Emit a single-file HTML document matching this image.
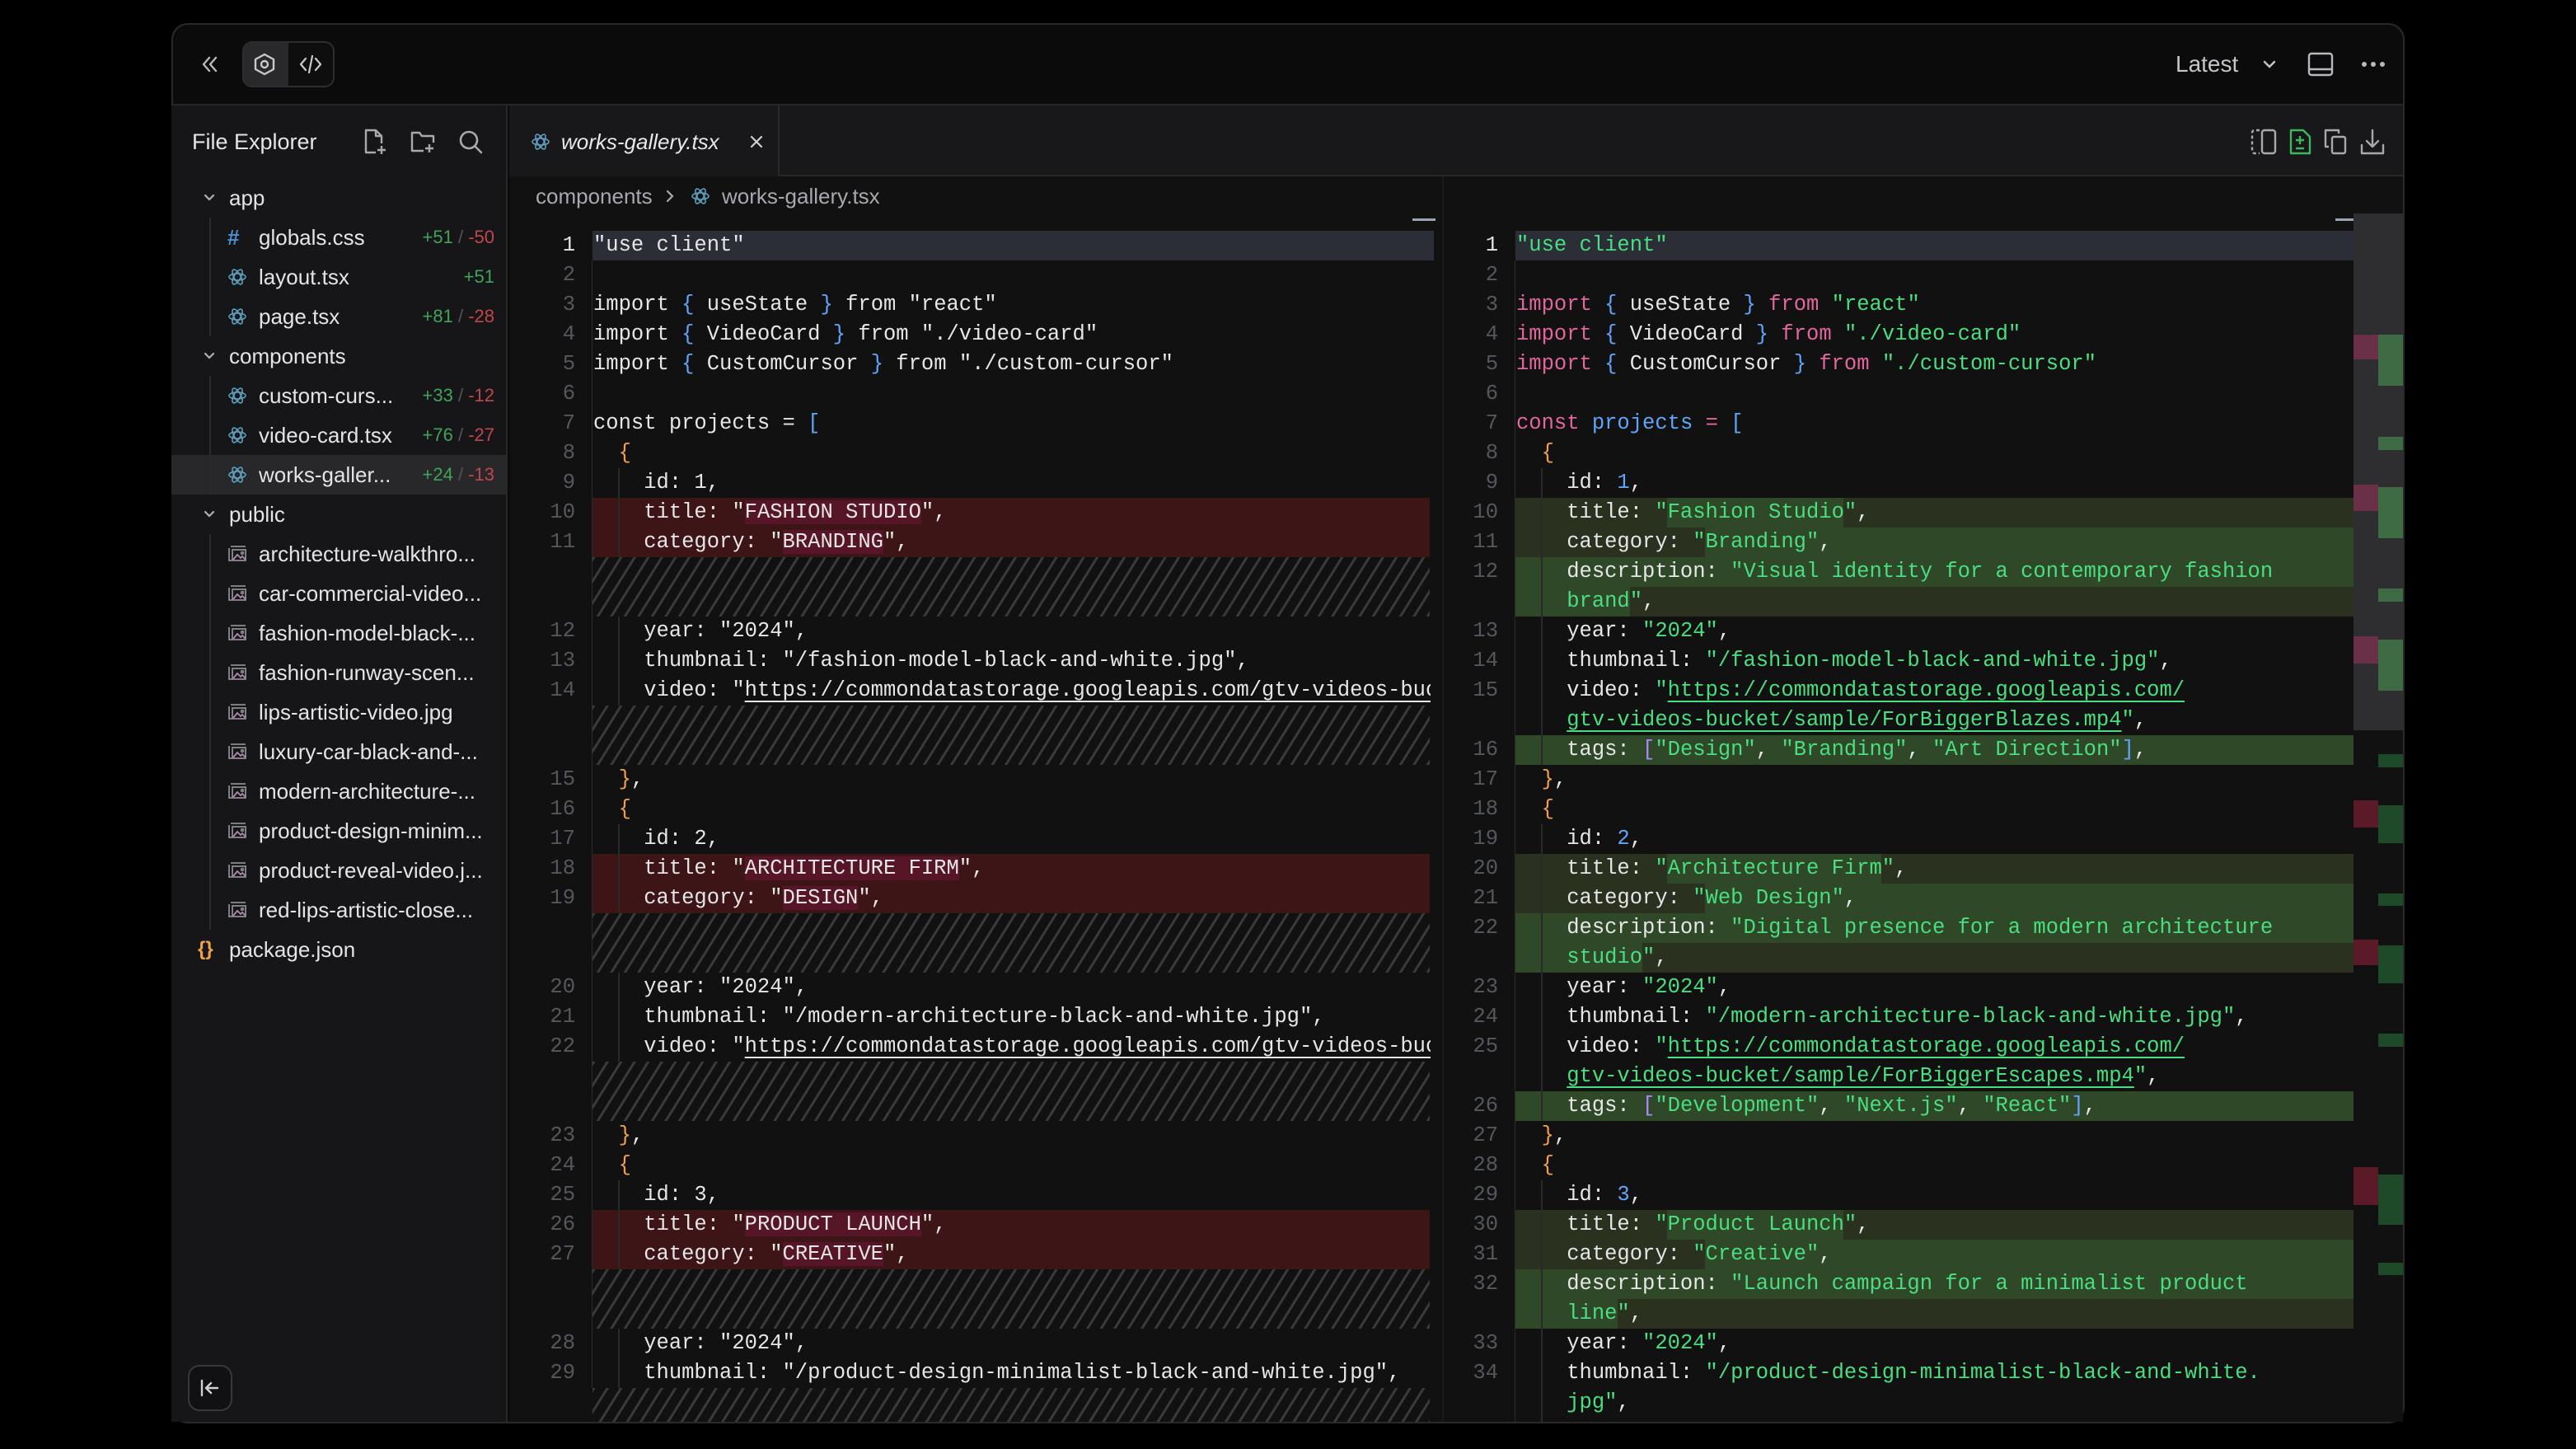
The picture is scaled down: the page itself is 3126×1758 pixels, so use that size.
<!DOCTYPE html>
<html><head><meta charset="utf-8"><style>
*{margin:0;padding:0;box-sizing:border-box}
body{width:3126px;height:1758px;background:#000;position:relative;overflow:hidden;font-family:"Liberation Sans",sans-serif}
.win{position:absolute;left:208px;top:28px;width:2710px;height:1699px;border:2px solid #2a2a2c;border-radius:20px;background:#0b0b0c;overflow:hidden}
.a{position:absolute}
.side{position:absolute;left:208px;top:128px;width:408px;height:1597px;background:#161618;border-right:2px solid #28282b}
.st{position:absolute;font-size:26px;color:#e4e4e7;line-height:48px;height:48px;white-space:nowrap}
.stat{position:absolute;right:0;font-size:22px;line-height:48px;height:48px;white-space:nowrap}
.g{color:#3fa35a}.rd{color:#c0464e}.sl{color:#555}
.r{position:absolute;height:36px;line-height:36px;white-space:pre;font-family:"Liberation Mono",monospace;font-size:25.5px;overflow:hidden}
.nl{left:640px;width:58px;text-align:right;color:#54585e}
.cl{left:720px;width:1016px;color:#e6e6e6}
.nr{left:1760px;width:58px;text-align:right;color:#54585e}
.cr{left:1840px;width:1016px;color:#e6e6e6}
.k{color:#e2669e}.s{color:#4ade80}.b{color:#60a5fa}.o{color:#f0a04b}.p{color:#a78bfa}
u{text-decoration:underline;text-underline-offset:6px;text-decoration-thickness:2px}
.del{position:absolute;left:719px;width:1016px;height:36px;background:#3d1517}
.dh{background:#561628}
.hat{position:absolute;left:719px;width:1016px;background:repeating-linear-gradient(122deg,#3a3a3c 0 3px,transparent 3px 14px)}
.add{position:absolute;left:1839px;width:1017px;height:36px;background:#2a311f}
.br{position:absolute;height:36px;background:#2f4828}
.guide{position:absolute;width:2px;background:#2a2a2c}
.mm{position:absolute}
</style></head><body>
<div class="win"></div>
<!-- top bar -->
<div class="a" style="left:210px;top:126px;width:2706px;height:2px;background:#262628"></div>
<svg class="a" style="left:240px;top:64px" width="28" height="28" viewBox="0 0 28 28" fill="none" stroke="#b8b8bd" stroke-width="2.4" stroke-linecap="round" stroke-linejoin="round"><path d="M14 6l-7 8 7 8M22 6l-7 8 7 8"/></svg>
<div class="a" style="left:294px;top:50px;width:112px;height:56px;border:2px solid #2e2e31;border-radius:12px;background:#0e0e0f"></div>
<div class="a" style="left:296px;top:52px;width:54px;height:52px;border-radius:10px 0 0 10px;background:#29292c"></div>
<svg class="a" style="left:305px;top:62px" width="32" height="32" viewBox="0 0 32 32" fill="none" stroke="#c8c8cc" stroke-width="2.4"><path d="M16 4l11 6v12l-11 6-11-6V10z" stroke-linejoin="round"/><circle cx="16" cy="16" r="4"/></svg>
<svg class="a" style="left:361px;top:62px" width="32" height="32" viewBox="0 0 32 32" fill="none" stroke="#c8c8cc" stroke-width="2.2" stroke-linecap="round" stroke-linejoin="round"><path d="M10 9l-6 7 6 7M22 9l6 7-6 7M18 6l-4 20"/></svg>
<div class="a" style="left:2640px;top:60px;font-size:28px;color:#c4c4c9;line-height:36px">Latest</div>
<svg class="a" style="left:2742px;top:66px" width="24" height="24" viewBox="0 0 24 24" fill="none" stroke="#c4c4c9" stroke-width="2.4" stroke-linecap="round"><path d="M6 9l6 6 6-6"/></svg>
<svg class="a" style="left:2798px;top:60px" width="36" height="36" viewBox="0 0 36 36" fill="none" stroke="#b8b8bd" stroke-width="2.4"><rect x="4" y="5" width="28" height="26" rx="3"/><path d="M4 24h28"/></svg>
<svg class="a" style="left:2864px;top:68px" width="32" height="20" viewBox="0 0 32 20" fill="#b8b8bd"><circle cx="5" cy="10" r="3"/><circle cx="16" cy="10" r="3"/><circle cx="27" cy="10" r="3"/></svg>

<!-- sidebar -->
<div class="side">
<div class="a" style="left:25px;top:26px;font-size:27px;color:#e4e4e7;line-height:36px">File Explorer</div>
<svg class="a" style="left:230px;top:27px" width="34" height="34" viewBox="0 0 34 34" fill="none" stroke="#a8a8ad" stroke-width="2.4" stroke-linejoin="round"><path d="M18 30H6V3h12l7 7v9"/><path d="M18 3v7h7M25 22v10M20 27h10"/></svg>
<svg class="a" style="left:288px;top:27px" width="34" height="34" viewBox="0 0 34 34" fill="none" stroke="#a8a8ad" stroke-width="2.4" stroke-linejoin="round"><path d="M18 28H4V6h9l3 4h14v8"/><path d="M25 20v10M20 25h10"/></svg>
<svg class="a" style="left:346px;top:27px" width="34" height="34" viewBox="0 0 34 34" fill="none" stroke="#a8a8ad" stroke-width="2.6" stroke-linecap="round"><circle cx="15" cy="15" r="10"/><path d="M22 22l8 8"/></svg>
<!-- rows: sidebar origin top 128; row centers 240.. -> top = center-24-128 -->
<div class="a" style="left:0;top:424px;width:406px;height:48px;background:#28282b"></div>
<div class="guide" style="left:46px;top:136px;height:144px"></div>
<div class="guide" style="left:46px;top:328px;height:144px"></div>
<div class="guide" style="left:46px;top:520px;height:480px"></div>
</div>
<!-- sidebar items absolute -->
<svg class="a" style="left:244px;top:230px" width="20" height="20" viewBox="0 0 20 20" fill="none" stroke="#b0b0b5" stroke-width="2.2" stroke-linecap="round"><path d="M5 7l5 5 5-5"/></svg>
<div class="st" style="left:278px;top:216px">app</div>
<div class="a" style="left:276px;top:274px;font-size:26px;font-weight:bold;color:#4a8fd0;line-height:28px">#</div>
<div class="st" style="left:314px;top:264px">globals.css</div>
<div class="st" style="left:314px;top:312px">layout.tsx</div>
<div class="st" style="left:314px;top:360px">page.tsx</div>
<svg class="a" style="left:244px;top:422px" width="20" height="20" viewBox="0 0 20 20" fill="none" stroke="#b0b0b5" stroke-width="2.2" stroke-linecap="round"><path d="M5 7l5 5 5-5"/></svg>
<div class="st" style="left:278px;top:408px">components</div>
<div class="st" style="left:314px;top:456px">custom-curs...</div>
<div class="st" style="left:314px;top:504px">video-card.tsx</div>
<div class="st" style="left:314px;top:552px">works-galler...</div>
<svg class="a" style="left:244px;top:614px" width="20" height="20" viewBox="0 0 20 20" fill="none" stroke="#b0b0b5" stroke-width="2.2" stroke-linecap="round"><path d="M5 7l5 5 5-5"/></svg>
<div class="st" style="left:278px;top:600px">public</div>
<div class="st" style="left:314px;top:648px">architecture-walkthro...</div>
<div class="st" style="left:314px;top:696px">car-commercial-video...</div>
<div class="st" style="left:314px;top:744px">fashion-model-black-...</div>
<div class="st" style="left:314px;top:792px">fashion-runway-scen...</div>
<div class="st" style="left:314px;top:840px">lips-artistic-video.jpg</div>
<div class="st" style="left:314px;top:888px">luxury-car-black-and-...</div>
<div class="st" style="left:314px;top:936px">modern-architecture-...</div>
<div class="st" style="left:314px;top:984px">product-design-minim...</div>
<div class="st" style="left:314px;top:1032px">product-reveal-video.j...</div>
<div class="st" style="left:314px;top:1080px">red-lips-artistic-close...</div>
<div class="a" style="left:240px;top:1138px;font-size:24px;font-weight:bold;color:#f0a04b;line-height:28px">{}</div>
<div class="st" style="left:278px;top:1128px">package.json</div>
<!-- stats -->
<div class="stat" style="left:460px;width:140px;text-align:right;top:264px"><span class="g">+51</span><span class="sl"> / </span><span class="rd">-50</span></div>
<div class="stat" style="left:460px;width:140px;text-align:right;top:312px"><span class="g">+51</span></div>
<div class="stat" style="left:460px;width:140px;text-align:right;top:360px"><span class="g">+81</span><span class="sl"> / </span><span class="rd">-28</span></div>
<div class="stat" style="left:460px;width:140px;text-align:right;top:456px"><span class="g">+33</span><span class="sl"> / </span><span class="rd">-12</span></div>
<div class="stat" style="left:460px;width:140px;text-align:right;top:504px"><span class="g">+76</span><span class="sl"> / </span><span class="rd">-27</span></div>
<div class="stat" style="left:460px;width:140px;text-align:right;top:552px"><span class="g">+24</span><span class="sl"> / </span><span class="rd">-13</span></div>
<!-- react icons -->
<svg width="0" height="0" style="position:absolute"><defs><g id="atom" fill="none" stroke="#5f9fbf" stroke-width="1.6"><ellipse cx="12" cy="12" rx="10" ry="4"/><ellipse cx="12" cy="12" rx="10" ry="4" transform="rotate(60 12 12)"/><ellipse cx="12" cy="12" rx="10" ry="4" transform="rotate(120 12 12)"/></g>
<g id="img" fill="none" stroke="#8a8a90" stroke-width="1.8"><path d="M2 5v15h3M4 3h18"/><rect x="6" y="7" width="16" height="13"/><path d="M7 19l5-6 4 4 2-2 4 4" stroke="#b08aa8"/><circle cx="18" cy="11" r="1.4"/></g></defs></svg>
<svg class="a" style="left:276px;top:324px" width="24" height="24"><use href="#atom"/></svg>
<svg class="a" style="left:276px;top:372px" width="24" height="24"><use href="#atom"/></svg>
<svg class="a" style="left:276px;top:468px" width="24" height="24"><use href="#atom"/></svg>
<svg class="a" style="left:276px;top:516px" width="24" height="24"><use href="#atom"/></svg>
<svg class="a" style="left:276px;top:564px" width="24" height="24"><use href="#atom"/></svg>
<svg class="a" style="left:276px;top:660px" width="24" height="24"><use href="#img"/></svg>
<svg class="a" style="left:276px;top:708px" width="24" height="24"><use href="#img"/></svg>
<svg class="a" style="left:276px;top:756px" width="24" height="24"><use href="#img"/></svg>
<svg class="a" style="left:276px;top:804px" width="24" height="24"><use href="#img"/></svg>
<svg class="a" style="left:276px;top:852px" width="24" height="24"><use href="#img"/></svg>
<svg class="a" style="left:276px;top:900px" width="24" height="24"><use href="#img"/></svg>
<svg class="a" style="left:276px;top:948px" width="24" height="24"><use href="#img"/></svg>
<svg class="a" style="left:276px;top:996px" width="24" height="24"><use href="#img"/></svg>
<svg class="a" style="left:276px;top:1044px" width="24" height="24"><use href="#img"/></svg>
<svg class="a" style="left:276px;top:1092px" width="24" height="24"><use href="#img"/></svg>
<!-- collapse btn -->
<div class="a" style="left:228px;top:1656px;width:54px;height:56px;border:2px solid #38383b;border-radius:14px;background:#111113"></div>
<svg class="a" style="left:240px;top:1670px" width="30" height="28" viewBox="0 0 30 28" fill="none" stroke="#d0d0d4" stroke-width="2.4" stroke-linecap="round" stroke-linejoin="round"><path d="M5 5v18M24 14H10M16 8l-6 6 6 6"/></svg>

<!-- editor -->
<div class="a" style="left:618px;top:128px;width:2298px;height:86px;background:#18181b"></div>
<div class="a" style="left:945px;top:212px;width:1971px;height:2px;background:#28282b"></div>
<div class="a" style="left:944px;top:128px;width:2px;height:86px;background:#28282b"></div>
<div class="a" style="left:618px;top:214px;width:2298px;height:1511px;background:#111111"></div>
<svg class="a" style="left:644px;top:160px" width="24" height="24"><use href="#atom"/></svg>
<div class="a" style="left:681px;top:154px;font-size:26px;font-style:italic;color:#e8e8ec;line-height:36px">works-gallery.tsx</div>
<svg class="a" style="left:906px;top:160px" width="24" height="24" viewBox="0 0 24 24" stroke="#d0d0d4" stroke-width="2.2" stroke-linecap="round"><path d="M6 6l12 12M18 6L6 18"/></svg>
<!-- tab bar right icons -->
<svg class="a" style="left:2730px;top:154px" width="34" height="36" viewBox="0 0 34 36" fill="none" stroke="#a8a8ad" stroke-width="2.4"><path d="M12 4H6a3 3 0 0 0-3 3v22a3 3 0 0 0 3 3h6" stroke-dasharray="4 3"/><rect x="15" y="4" width="16" height="28" rx="3"/></svg>
<svg class="a" style="left:2776px;top:154px" width="30" height="36" viewBox="0 0 30 36" fill="none" stroke="#3cb85c" stroke-width="2.4" stroke-linejoin="round"><path d="M4 4h15l8 8v20H4z"/><path d="M15 11v10M10 16h10M10 26h10"/></svg>
<svg class="a" style="left:2818px;top:154px" width="34" height="36" viewBox="0 0 34 36" fill="none" stroke="#a8a8ad" stroke-width="2.4" stroke-linejoin="round"><path d="M8 24H4V4h16v4"/><rect x="12" y="12" width="16" height="20" rx="2"/></svg>
<svg class="a" style="left:2862px;top:154px" width="34" height="36" viewBox="0 0 34 36" fill="none" stroke="#a8a8ad" stroke-width="2.4" stroke-linecap="round" stroke-linejoin="round"><path d="M4 22v10h26V22M17 4v20M10 17l7 7 7-7"/></svg>
<!-- breadcrumb -->
<div class="a" style="left:650px;top:220px;font-size:26px;color:#a8a8b0;line-height:36px">components</div>
<svg class="a" style="left:804px;top:228px" width="18" height="20" viewBox="0 0 18 20" fill="none" stroke="#a8a8b0" stroke-width="2.2" stroke-linecap="round"><path d="M6 4l6 6-6 6"/></svg>
<svg class="a" style="left:838px;top:226px" width="24" height="24"><use href="#atom"/></svg>
<div class="a" style="left:876px;top:220px;font-size:26px;color:#a8a8b0;line-height:36px">works-gallery.tsx</div>
<div class="a" style="left:1714px;top:265px;width:28px;height:3px;background:#9aa4b4"></div>
<div class="a" style="left:2834px;top:265px;width:28px;height:3px;background:#9aa4b4"></div>

<!-- left pane backgrounds -->
<div class="a" style="left:719px;top:280px;width:1021px;height:36px;background:#2b2e36"></div>
<div class="del" style="top:604px"></div><div class="del" style="top:640px"></div>
<div class="del" style="top:1036px"></div><div class="del" style="top:1072px"></div>
<div class="del" style="top:1468px"></div><div class="del" style="top:1504px"></div>
<div class="hat" style="top:676px;height:72px"></div>
<div class="hat" style="top:856px;height:72px"></div>
<div class="hat" style="top:1108px;height:72px"></div>
<div class="hat" style="top:1288px;height:72px"></div>
<div class="hat" style="top:1540px;height:72px"></div>
<div class="hat" style="top:1684px;height:41px"></div>
<div class="guide" style="left:718px;top:316px;height:1368px;width:1px;background:#2a2a2c"></div>
<div class="guide" style="left:750px;top:568px;height:108px"></div>
<div class="guide" style="left:750px;top:748px;height:108px"></div>
<div class="guide" style="left:750px;top:1000px;height:108px"></div>
<div class="guide" style="left:750px;top:1180px;height:108px"></div>
<div class="guide" style="left:750px;top:1432px;height:108px"></div>
<div class="guide" style="left:750px;top:1612px;height:72px"></div>
<div class="a" style="left:1750px;top:214px;width:2px;height:1511px;background:#1a1a1c"></div>

<!-- right pane backgrounds -->
<div class="a" style="left:1839px;top:280px;width:1017px;height:36px;background:#2b2e36"></div>
<div class="add" style="top:604px"></div><div class="br" style="top:604px;left:2023px;width:214px"></div>
<div class="add" style="top:640px"></div><div class="br" style="top:640px;left:2069px;width:787px"></div>
<div class="br" style="top:676px;left:1839px;width:1017px"></div>
<div class="add" style="top:712px"></div><div class="br" style="top:712px;left:1839px;width:139px"></div>
<div class="br" style="top:892px;left:1839px;width:1017px"></div>
<div class="add" style="top:1036px"></div><div class="br" style="top:1036px;left:2023px;width:260px"></div>
<div class="add" style="top:1072px"></div><div class="br" style="top:1072px;left:2069px;width:787px"></div>
<div class="br" style="top:1108px;left:1839px;width:1017px"></div>
<div class="add" style="top:1144px"></div><div class="br" style="top:1144px;left:1839px;width:154px"></div>
<div class="br" style="top:1324px;left:1839px;width:1017px"></div>
<div class="add" style="top:1468px"></div><div class="br" style="top:1468px;left:2023px;width:214px"></div>
<div class="add" style="top:1504px"></div><div class="br" style="top:1504px;left:2069px;width:787px"></div>
<div class="br" style="top:1540px;left:1839px;width:1017px"></div>
<div class="add" style="top:1576px"></div><div class="br" style="top:1576px;left:1839px;width:124px"></div>
<div class="guide" style="left:1838px;top:316px;height:1409px;width:1px;background:#2a2a2c"></div>
<div class="guide" style="left:1870px;top:568px;height:360px"></div>
<div class="guide" style="left:1870px;top:1000px;height:360px"></div>
<div class="guide" style="left:1870px;top:1432px;height:293px"></div>

<!-- minimap -->
<div class="mm" style="left:2856px;top:259px;width:60px;height:627px;background:#2e2e30"></div>
<div class="mm" style="left:2856px;top:406px;width:30px;height:30px;background:#6a3048"></div>
<div class="mm" style="left:2856px;top:588px;width:30px;height:32px;background:#6a3048"></div>
<div class="mm" style="left:2856px;top:772px;width:30px;height:33px;background:#6a3048"></div>
<div class="mm" style="left:2856px;top:971px;width:30px;height:33px;background:#5a1a28"></div>
<div class="mm" style="left:2856px;top:1140px;width:30px;height:31px;background:#5a1a28"></div>
<div class="mm" style="left:2856px;top:1416px;width:30px;height:46px;background:#5a1a28"></div>
<div class="mm" style="left:2886px;top:406px;width:30px;height:62px;background:#3e6a44"></div>
<div class="mm" style="left:2886px;top:530px;width:30px;height:16px;background:#3e6a44"></div>
<div class="mm" style="left:2886px;top:591px;width:30px;height:62px;background:#3e6a44"></div>
<div class="mm" style="left:2886px;top:714px;width:30px;height:16px;background:#3e6a44"></div>
<div class="mm" style="left:2886px;top:776px;width:30px;height:62px;background:#3e6a44"></div>
<div class="mm" style="left:2886px;top:915px;width:30px;height:16px;background:#1f4a2a"></div>
<div class="mm" style="left:2886px;top:977px;width:30px;height:46px;background:#1f4a2a"></div>
<div class="mm" style="left:2886px;top:1084px;width:30px;height:15px;background:#1f4a2a"></div>
<div class="mm" style="left:2886px;top:1147px;width:30px;height:46px;background:#1f4a2a"></div>
<div class="mm" style="left:2886px;top:1254px;width:30px;height:16px;background:#1f4a2a"></div>
<div class="mm" style="left:2886px;top:1425px;width:30px;height:61px;background:#1f4a2a"></div>
<div class="mm" style="left:2886px;top:1532px;width:30px;height:15px;background:#1f4a2a"></div>

<!-- left code -->
<div class="r nl" style="top:280px;color:#e6e6e6">1</div><div class="r cl" style="top:280px">"use client"</div>
<div class="r nl" style="top:316px">2</div>
<div class="r nl" style="top:352px">3</div><div class="r cl" style="top:352px">import <span class="b">{</span> useState <span class="b">}</span> from "react"</div>
<div class="r nl" style="top:388px">4</div><div class="r cl" style="top:388px">import <span class="b">{</span> VideoCard <span class="b">}</span> from "./video-card"</div>
<div class="r nl" style="top:424px">5</div><div class="r cl" style="top:424px">import <span class="b">{</span> CustomCursor <span class="b">}</span> from "./custom-cursor"</div>
<div class="r nl" style="top:460px">6</div>
<div class="r nl" style="top:496px">7</div><div class="r cl" style="top:496px">const projects = <span class="b">[</span></div>
<div class="r nl" style="top:532px">8</div><div class="r cl" style="top:532px">  <span class="o">{</span></div>
<div class="r nl" style="top:568px">9</div><div class="r cl" style="top:568px">    id: 1,</div>
<div class="r nl" style="top:604px">10</div><div class="r cl" style="top:604px">    title: "<span class="dh">FASHION STUDIO</span>",</div>
<div class="r nl" style="top:640px">11</div><div class="r cl" style="top:640px">    category: "<span class="dh">BRANDING</span>",</div>
<div class="r nl" style="top:748px">12</div><div class="r cl" style="top:748px">    year: "2024",</div>
<div class="r nl" style="top:784px">13</div><div class="r cl" style="top:784px">    thumbnail: "/fashion-model-black-and-white.jpg",</div>
<div class="r nl" style="top:820px">14</div><div class="r cl" style="top:820px">    video: "<u>https://commondatastorage.googleapis.com/gtv-videos-bucket/sample/ForBiggerBlazes.mp4</u>",</div>
<div class="r nl" style="top:928px">15</div><div class="r cl" style="top:928px">  <span class="o">}</span>,</div>
<div class="r nl" style="top:964px">16</div><div class="r cl" style="top:964px">  <span class="o">{</span></div>
<div class="r nl" style="top:1000px">17</div><div class="r cl" style="top:1000px">    id: 2,</div>
<div class="r nl" style="top:1036px">18</div><div class="r cl" style="top:1036px">    title: "<span class="dh">ARCHITECTURE FIRM</span>",</div>
<div class="r nl" style="top:1072px">19</div><div class="r cl" style="top:1072px">    category: "<span class="dh">DESIGN</span>",</div>
<div class="r nl" style="top:1180px">20</div><div class="r cl" style="top:1180px">    year: "2024",</div>
<div class="r nl" style="top:1216px">21</div><div class="r cl" style="top:1216px">    thumbnail: "/modern-architecture-black-and-white.jpg",</div>
<div class="r nl" style="top:1252px">22</div><div class="r cl" style="top:1252px">    video: "<u>https://commondatastorage.googleapis.com/gtv-videos-bucket/sample/ForBiggerEscapes.mp4</u>",</div>
<div class="r nl" style="top:1360px">23</div><div class="r cl" style="top:1360px">  <span class="o">}</span>,</div>
<div class="r nl" style="top:1396px">24</div><div class="r cl" style="top:1396px">  <span class="o">{</span></div>
<div class="r nl" style="top:1432px">25</div><div class="r cl" style="top:1432px">    id: 3,</div>
<div class="r nl" style="top:1468px">26</div><div class="r cl" style="top:1468px">    title: "<span class="dh">PRODUCT LAUNCH</span>",</div>
<div class="r nl" style="top:1504px">27</div><div class="r cl" style="top:1504px">    category: "<span class="dh">CREATIVE</span>",</div>
<div class="r nl" style="top:1612px">28</div><div class="r cl" style="top:1612px">    year: "2024",</div>
<div class="r nl" style="top:1648px">29</div><div class="r cl" style="top:1648px">    thumbnail: "/product-design-minimalist-black-and-white.jpg",</div>

<!-- right code -->
<div class="r nr" style="top:280px;color:#e6e6e6">1</div><div class="r cr" style="top:280px"><span class="s">"use client"</span></div>
<div class="r nr" style="top:316px">2</div>
<div class="r nr" style="top:352px">3</div><div class="r cr" style="top:352px"><span class="k">import</span> <span class="b">{</span> useState <span class="b">}</span> <span class="k">from</span> <span class="s">"react"</span></div>
<div class="r nr" style="top:388px">4</div><div class="r cr" style="top:388px"><span class="k">import</span> <span class="b">{</span> VideoCard <span class="b">}</span> <span class="k">from</span> <span class="s">"./video-card"</span></div>
<div class="r nr" style="top:424px">5</div><div class="r cr" style="top:424px"><span class="k">import</span> <span class="b">{</span> CustomCursor <span class="b">}</span> <span class="k">from</span> <span class="s">"./custom-cursor"</span></div>
<div class="r nr" style="top:460px">6</div>
<div class="r nr" style="top:496px">7</div><div class="r cr" style="top:496px"><span class="k">const</span> <span class="b">projects</span> <span class="k">=</span> <span class="b">[</span></div>
<div class="r nr" style="top:532px">8</div><div class="r cr" style="top:532px">  <span class="o">{</span></div>
<div class="r nr" style="top:568px">9</div><div class="r cr" style="top:568px">    id: <span class="b">1</span>,</div>
<div class="r nr" style="top:604px">10</div><div class="r cr" style="top:604px">    title: <span class="s">"Fashion Studio"</span>,</div>
<div class="r nr" style="top:640px">11</div><div class="r cr" style="top:640px">    category: <span class="s">"Branding"</span>,</div>
<div class="r nr" style="top:676px">12</div><div class="r cr" style="top:676px">    description: <span class="s">"Visual identity for a contemporary fashion</span></div>
<div class="r cr" style="top:712px"><span class="s">    brand"</span>,</div>
<div class="r nr" style="top:748px">13</div><div class="r cr" style="top:748px">    year: <span class="s">"2024"</span>,</div>
<div class="r nr" style="top:784px">14</div><div class="r cr" style="top:784px">    thumbnail: <span class="s">"/fashion-model-black-and-white.jpg"</span>,</div>
<div class="r nr" style="top:820px">15</div><div class="r cr" style="top:820px">    video: <span class="s">"<u>https://commondatastorage.googleapis.com/</u></span></div>
<div class="r cr" style="top:856px"><span class="s">    <u>gtv-videos-bucket/sample/ForBiggerBlazes.mp4</u>"</span>,</div>
<div class="r nr" style="top:892px">16</div><div class="r cr" style="top:892px">    tags: <span class="p">[</span><span class="s">"Design"</span>, <span class="s">"Branding"</span>, <span class="s">"Art Direction"</span><span class="b">]</span>,</div>
<div class="r nr" style="top:928px">17</div><div class="r cr" style="top:928px">  <span class="o">}</span>,</div>
<div class="r nr" style="top:964px">18</div><div class="r cr" style="top:964px">  <span class="o">{</span></div>
<div class="r nr" style="top:1000px">19</div><div class="r cr" style="top:1000px">    id: <span class="b">2</span>,</div>
<div class="r nr" style="top:1036px">20</div><div class="r cr" style="top:1036px">    title: <span class="s">"Architecture Firm"</span>,</div>
<div class="r nr" style="top:1072px">21</div><div class="r cr" style="top:1072px">    category: <span class="s">"Web Design"</span>,</div>
<div class="r nr" style="top:1108px">22</div><div class="r cr" style="top:1108px">    description: <span class="s">"Digital presence for a modern architecture</span></div>
<div class="r cr" style="top:1144px"><span class="s">    studio"</span>,</div>
<div class="r nr" style="top:1180px">23</div><div class="r cr" style="top:1180px">    year: <span class="s">"2024"</span>,</div>
<div class="r nr" style="top:1216px">24</div><div class="r cr" style="top:1216px">    thumbnail: <span class="s">"/modern-architecture-black-and-white.jpg"</span>,</div>
<div class="r nr" style="top:1252px">25</div><div class="r cr" style="top:1252px">    video: <span class="s">"<u>https://commondatastorage.googleapis.com/</u></span></div>
<div class="r cr" style="top:1288px"><span class="s">    <u>gtv-videos-bucket/sample/ForBiggerEscapes.mp4</u>"</span>,</div>
<div class="r nr" style="top:1324px">26</div><div class="r cr" style="top:1324px">    tags: <span class="p">[</span><span class="s">"Development"</span>, <span class="s">"Next.js"</span>, <span class="s">"React"</span><span class="b">]</span>,</div>
<div class="r nr" style="top:1360px">27</div><div class="r cr" style="top:1360px">  <span class="o">}</span>,</div>
<div class="r nr" style="top:1396px">28</div><div class="r cr" style="top:1396px">  <span class="o">{</span></div>
<div class="r nr" style="top:1432px">29</div><div class="r cr" style="top:1432px">    id: <span class="b">3</span>,</div>
<div class="r nr" style="top:1468px">30</div><div class="r cr" style="top:1468px">    title: <span class="s">"Product Launch"</span>,</div>
<div class="r nr" style="top:1504px">31</div><div class="r cr" style="top:1504px">    category: <span class="s">"Creative"</span>,</div>
<div class="r nr" style="top:1540px">32</div><div class="r cr" style="top:1540px">    description: <span class="s">"Launch campaign for a minimalist product</span></div>
<div class="r cr" style="top:1576px"><span class="s">    line"</span>,</div>
<div class="r nr" style="top:1612px">33</div><div class="r cr" style="top:1612px">    year: <span class="s">"2024"</span>,</div>
<div class="r nr" style="top:1648px">34</div><div class="r cr" style="top:1648px">    thumbnail: <span class="s">"/product-design-minimalist-black-and-white.</span></div>
<div class="r cr" style="top:1684px"><span class="s">    jpg"</span>,</div>
</body></html>
